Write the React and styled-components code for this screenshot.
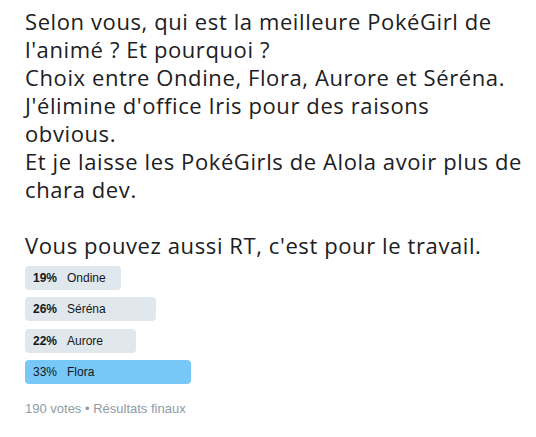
import styled, { createGlobalStyle } from 'styled-components';

const Global = createGlobalStyle`
  body {
    margin: 0;
    background: #fff;
  }
`;

const Tweet = styled.div`
  padding: 7px 8px 0 25px;
  width: 503px;
`;

const TweetText = styled.p`
  margin: 0;
  font-family: "Open Sans", "Noto Sans", sans-serif;
  font-size: 22px;
  line-height: 28px;
  letter-spacing: 0.6px;
  color: #1c2022;
  white-space: pre;
`;

const Poll = styled.div`
  margin-top: 7px;
  display: flex;
  flex-direction: column;
  gap: 7.3px;
  font-family: "Liberation Sans", Arial, sans-serif;
`;

const Choice = styled.div`
  display: flex;
  align-items: center;
  height: 24px;
  padding-left: 8px;
  box-sizing: border-box;
  border-radius: 4px;
  background: ${p => (p.$winner ? '#77c7f7' : '#e1e8ed')};
  font-size: 12px;
  line-height: 24px;
  color: #14171a;
  white-space: nowrap;
`;

const Percent = styled.span`
  width: 34px;
  font-weight: ${p => (p.$winner ? 400 : 700)};
`;

const Label = styled.span``;

const Footer = styled.div`
  margin-top: 17.5px;
  font-family: "Liberation Sans", Arial, sans-serif;
  font-size: 13px;
  line-height: 16px;
  color: #8f9ba6;
`;

const FULL = 503;

const choices = [
  { pct: 19, label: 'Ondine' },
  { pct: 26, label: 'Séréna' },
  { pct: 22, label: 'Aurore' },
  { pct: 33, label: 'Flora', winner: true },
];

const text = `Selon vous, qui est la meilleure PokéGirl de
l'animé ? Et pourquoi ?
Choix entre Ondine, Flora, Aurore et Séréna.
J'élimine d'office Iris pour des raisons
obvious.
Et je laisse les PokéGirls de Alola avoir plus de
chara dev.

Vous pouvez aussi RT, c'est pour le travail.`;

export default function App() {
  return (
    <>
      <Global />
      <Tweet>
        <TweetText>{text}</TweetText>
        <Poll>
          {choices.map(c => (
            <Choice key={c.label} $winner={c.winner} style={{ width: `${(c.pct / 100) * FULL}px` }}>
              <Percent $winner={c.winner}>{c.pct}%</Percent>
              <Label>{c.label}</Label>
            </Choice>
          ))}
        </Poll>
        <Footer>190 votes • Résultats finaux</Footer>
      </Tweet>
    </>
  );
}
